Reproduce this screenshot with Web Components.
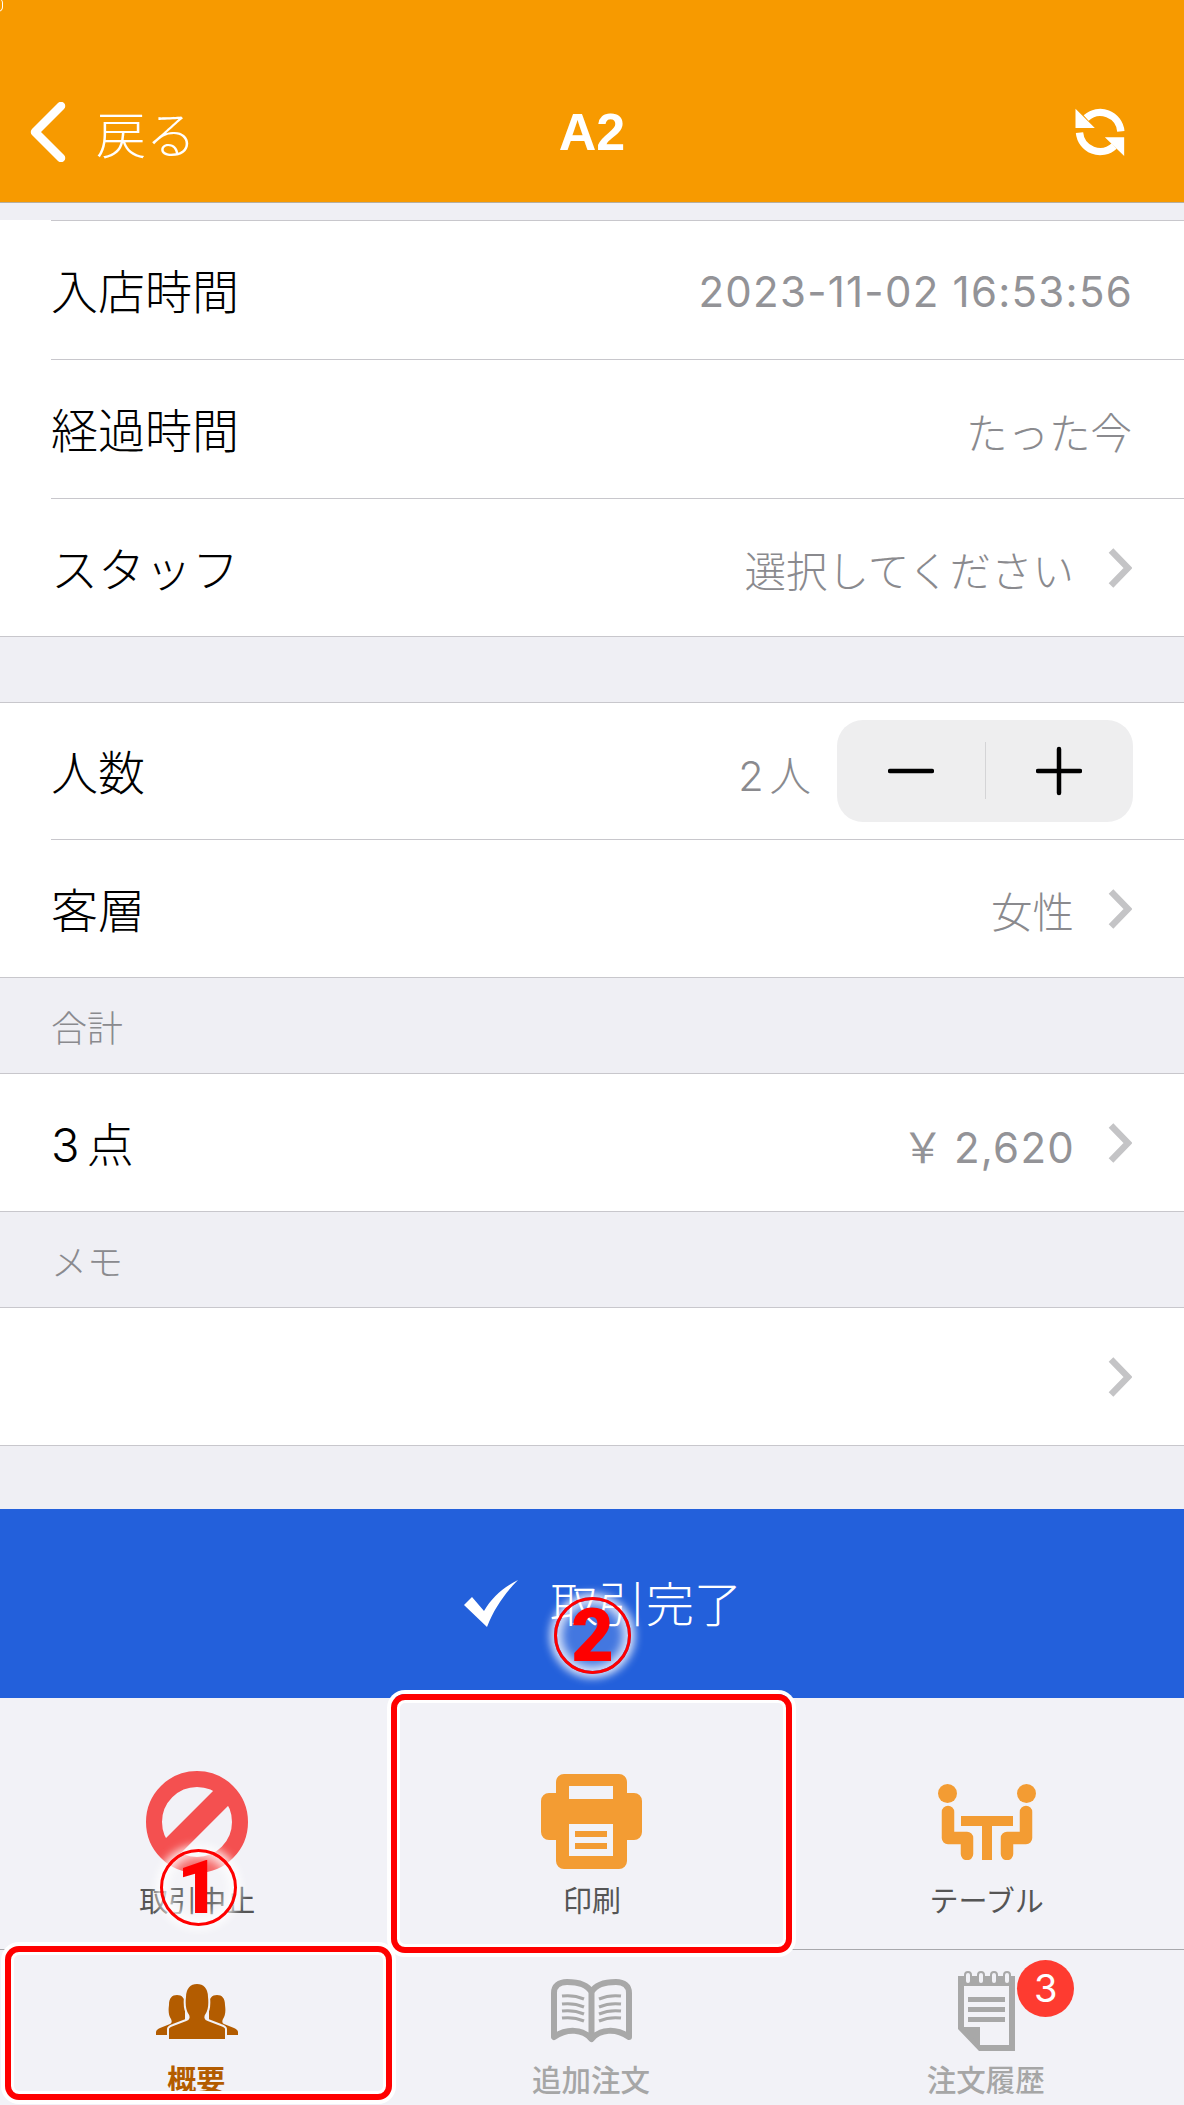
<!DOCTYPE html>
<html lang="ja">
<head>
<meta charset="utf-8">
<title>A2</title>
<style>
  html, body { margin: 0; padding: 0; }
  body {
    width: 1184px;
    height: 2105px;
    overflow: hidden;
    position: relative;
    background: #efeff4;
    font-family: Inter, "Noto Sans CJK JP", sans-serif;
    -webkit-font-smoothing: antialiased;
  }
  order-screen { height: 2105px; }
  .num { font-size: 42px; font-weight: 400; letter-spacing: 1.250px; margin-right: -1px; color: #939397; }
  .yen { word-spacing: -4px; }
  .tight { word-spacing: -6px; }
</style>
</head>
<body>
<order-screen>
  <nav-bar slot="nav" title-text="A2"></nav-bar>

  <form-section first>
    <form-row h="139">入店時間<span slot="value" class="num">2023-11-02 16:53:56</span></form-row>
    <form-row h="139">経過時間<span slot="value">たった今</span></form-row>
    <form-row h="137" last chevron>スタッフ<span slot="value">選択してください</span></form-row>
  </form-section>

  <form-section gap="65">
    <form-row>人数<span slot="value" class="tight">2 人</span><qty-stepper slot="extra"></qty-stepper></form-row>
    <form-row last chevron>客層<span slot="value">女性</span></form-row>
  </form-section>

  <section-head>合計</section-head>
  <form-section>
    <form-row last chevron><span class="tight">3 点</span><span slot="value" class="num yen">￥ 2,620</span></form-row>
  </form-section>

  <section-head>メモ</section-head>
  <form-section>
    <form-row last chevron></form-row>
  </form-section>

  <done-button>取引完了</done-button>

  <tool-bar>
    <tool-item>
      <svg slot="icon" width="102" height="102" viewBox="0 0 102 102"><circle cx="51" cy="51" r="43" fill="none" stroke="#f45050" stroke-width="16"/><path d="M81 21 21 81" stroke="#f45050" stroke-width="21"/></svg>
      取引中止
    </tool-item>
    <tool-item>
      <svg slot="icon" width="101" height="95" viewBox="0 0 101 95"><path fill="#f39c33" fill-rule="evenodd" d="M15 8a8 8 0 0 1 8-8h55a8 8 0 0 1 8 8v11h7a8 8 0 0 1 8 8v31a8 8 0 0 1-8 8h-7v21a8 8 0 0 1-8 8H23a8 8 0 0 1-8-8V66H8a8 8 0 0 1-8-8V27a8 8 0 0 1 8-8h7ZM28 12v13h44V12ZM28 50v32h44V50ZM34 57h32v6H34ZM34 69h32v6H34Z"/></svg>
      印刷
    </tool-item>
    <tool-item>
      <svg slot="icon" width="98" height="76" viewBox="0 0 98 76" fill="none" stroke="#f39c33"><circle cx="9.500" cy="9.500" r="9.500" fill="#f39c33" stroke="none"/><circle cx="88.500" cy="9.500" r="9.500" fill="#f39c33" stroke="none"/><path stroke-width="12.500" stroke-linecap="round" stroke-linejoin="round" d="M10 28v26h19v16M88 28v26H69v16"/><path fill="#f39c33" stroke="none" d="M23 32h52v10H54v34H44V42H23Z"/></svg>
      テーブル
    </tool-item>
  </tool-bar>

  <tab-bar>
    <tab-item active>
      <svg slot="icon" width="82" height="56" viewBox="0 0 82 56" fill="#b35c00"><path d="M0 52v-3c0-2 2-3 4-4l10-4c2-1 2-3 1-5-2-3-3-7-2-14 0-7 3-10 8-10s8 3 8 10v30Z"/><path d="M82 52v-3c0-2-2-3-4-4l-10-4c-2-1-2-3-1-5 2-3 3-7 2-14 0-7-3-10-8-10s-8 3-8 10v30Z"/><path stroke="#f2f2f7" stroke-width="2" d="M12 57V46c0-2 2-3 5-4l13-5c3-1 3-3 2-5-3-4-4-9-3-18C29 5 34 0 41 0s12 5 12 14c1 9 0 14-3 18-1 2-1 4 2 5l13 5c3 1 5 2 5 4v11Z"/></svg>
      概要
    </tab-item>
    <tab-item>
      <svg slot="icon" width="81" height="64" viewBox="0 0 81 64" fill="none" stroke="#a8a8a8"><path stroke-width="6" stroke-linejoin="round" d="M40.500 60C32 50 16 49 3 58V14C3 7 8 3 16 3c11 0 20 2 24.500 10 4.500-8 13.500-10 24.500-10 8 0 13 4 13 11v44C65 49 49 50 40.500 60ZM40.500 13v47"/><path stroke-width="3" d="M11 17c8-1 15 0 22 3M11 25c8-1 15 0 22 3M11 32c8-1 15 0 22 3M11 39c8-1 15 0 22 3M70 17c-8-1-15 0-22 3M70 25c-8-1-15 0-22 3M70 32c-8-1-15 0-22 3M70 39c-8-1-15 0-22 3"/></svg>
      追加注文
    </tab-item>
    <tab-item badge="3">
      <svg slot="icon" width="58" height="80" viewBox="0 0 58 80"><path fill="#a8a8a8" fill-rule="evenodd" d="M0 5h57v75H21L0 58ZM6 15v41h16v18h29V15ZM10 26h37v5H10ZM10 36h37v5H10ZM10 46h37v5H10Z"/><path fill="#a8a8a8" d="M7 58h13v16Z"/><g fill="#f2f2f7" stroke="#a8a8a8" stroke-width="2"><rect x="7" y="1" width="6" height="12" rx="3"/><rect x="20" y="1" width="6" height="12" rx="3"/><rect x="33" y="1" width="6" height="12" rx="3"/><rect x="46" y="1" width="6" height="12" rx="3"/></g></svg>
      注文履歴
    </tab-item>
  </tab-bar>

  <callout-box style="left:5px;top:1946px;width:387px;height:154px"></callout-box>
  <callout-box style="left:391px;top:1694px;width:401px;height:259px"></callout-box>
  <callout-mark style="left:160px;top:1849px">1</callout-mark>
  <callout-mark style="left:554px;top:1597px">2</callout-mark>
</order-screen>

<script>
const define = (name, css, html, init) => {
  customElements.define(name, class extends HTMLElement {
    constructor() {
      super()
      this.attachShadow({ mode: "open" }).innerHTML = `<style>${css}</style>${html}`
    }
    connectedCallback() {
      if (init) init(this, this.shadowRoot)
    }
  })
}

const chevron = `<svg class="chev" width="24" height="40" viewBox="0 0 24 40" fill="none" stroke="#c4c4c6" stroke-width="6.500"><path d="M3 2.500 20 20 3 37.500"/></svg>`

define("order-screen", /* css */ `
  :host { display: flex; flex-direction: column; width: 1184px; }
`, `<slot name="nav"></slot><slot></slot>`)

define("nav-bar", /* css */ `
  :host {
    display: grid;
    grid-template-columns: 1fr auto 1fr;
    align-items: center;
    height: 202px;
    position: relative;
    background: #f79a00;
    border-bottom: 1px solid #b5aea0;
    color: #fff;
  }
  :host::before {
    content: "";
    position: absolute;
    left: -2px; top: -2px;
    width: 4px; height: 12px;
    border: 1.500px solid #fff;
    border-left: 0;
    border-radius: 0 5px 5px 0;
  }
  .back { display: flex; align-items: center; gap: 30px; padding: 61px 0 0 30px; font-size: 50px; font-family: "Noto Sans CJK JP", sans-serif; font-weight: 300; }
  .title { padding-top: 61px; font: 700 52px "Liberation Sans", sans-serif; }
  .reload { justify-self: end; padding: 61px 58px 0 0; display: flex; }
`, /* html */ `
  <div class="back">
    <svg width="36" height="60" viewBox="0 0 36 60" fill="none" stroke="#fff" stroke-width="8.500" stroke-linecap="round" stroke-linejoin="round"><path d="M31 4 5 30 31 56"/></svg>
    <span>戻る</span>
  </div>
  <div class="title"></div>
  <div class="reload">
    <svg width="52" height="50" viewBox="42 33 155 150"><g fill="none" stroke="#fff" stroke-width="22"><path d="M78 66A62 62 0 0 1 182 106"/><path d="M58 110A62 62 0 0 0 162 150"/></g><path fill="#fff" d="M46 38V96H104ZM192 180V124H134Z"/></svg>
  </div>
`, (el, root) => {
  root.querySelector(".title").textContent = el.getAttribute("title-text")
})

define("form-section", /* css */ `
  :host {
    display: block;
    background: #fff;
    border-top: 1px solid #c8c7cc;
    border-bottom: 1px solid #c8c7cc;
  }
  :host([first]) { margin-top: 17px; border-top-color: transparent; position: relative; }
  :host([first])::before {
    content: "";
    position: absolute;
    left: 51px; right: 0; top: -1px;
    height: 1px;
    background: #c8c7cc;
  }
`, `<slot></slot>`, (el) => {
  const gap = el.getAttribute("gap")
  if (gap) el.style.marginTop = gap + "px"
})

define("form-row", /* css */ `
  :host {
    display: flex;
    align-items: center;
    height: 137px;
    box-sizing: border-box;
    margin-left: 51px;
    padding-right: 52px;
    border-bottom: 1px solid #c8c7cc;
    color: #000;
    font-size: 47px;
    font-weight: 300;
    font-family: Inter, "Noto Sans CJK JP", sans-serif;
  }
  :host([last]) { border-bottom: 0; }
  .label { flex: 1; padding-bottom: 3px; }
  .value { color: #8a8a8e; font-size: 41.500px; display: flex; align-items: center; padding-top: 3px; }
  .extra { display: flex; }
  .extra ::slotted(*) { margin: 0 -1px 0 26px; }
  .chev { display: block; margin-left: 34px; flex: none; }
  .tail { display: flex; }
`, /* html */ `
  <span class="label"><slot></slot></span>
  <span class="value"><slot name="value"></slot></span>
  <span class="extra"><slot name="extra"></slot></span>
  <span class="tail"></span>
`, (el, root) => {
  if (el.hasAttribute("chevron")) root.querySelector(".tail").innerHTML = chevron
  if (el.hasAttribute("h")) el.style.height = el.getAttribute("h") + "px"
})

define("qty-stepper", /* css */ `
  :host {
    display: grid;
    grid-template-columns: 1fr 1fr;
    align-items: center;
    width: 296px;
    height: 102px;
    border-radius: 26px;
    background: #eeeeef;
    position: relative;
  }
  span { display: flex; justify-content: center; }
  .line { position: absolute; left: 148px; top: 22px; width: 1px; height: 57px; background: #d4d4d6; }
`, /* html */ `
  <span><svg width="46" height="46" viewBox="0 0 46 46" fill="none" stroke="#000" stroke-width="4.500" stroke-linecap="round"><path d="M2 23h42"/></svg></span>
  <span><svg width="46" height="50" viewBox="0 0 46 50" fill="none" stroke="#000" stroke-width="4.500" stroke-linecap="round"><path d="M2 25h42M23 3v44"/></svg></span>
  <i class="line"></i>
`)

define("section-head", /* css */ `
  :host {
    display: flex;
    align-items: center;
    height: 95px;
    padding-left: 51px;
    color: #8a8a8e;
    font-size: 36px;
    font-weight: 300;
    font-family: "Noto Sans CJK JP", sans-serif;
  }
`, `<slot></slot>`)

define("done-button", /* css */ `
  :host {
    display: flex;
    align-items: center;
    justify-content: center;
    gap: 32px;
    height: 189px;
    margin-top: 63px;
    padding-left: 22px;
    box-sizing: border-box;
    background: #2360db;
    color: #fff;
    font-size: 48px;
    font-family: "Noto Sans CJK JP", sans-serif;
    font-weight: 300;
  }
  span { padding-bottom: 6px; }
`, /* html */ `
  <svg width="54" height="47" viewBox="0 0 54 47" fill="#fff"><path d="M0 25 8 17 20 31C28 17 40 7 54 0 42 12 30 28 23 47Z"/></svg>
  <span><slot></slot></span>
`)

define("tool-bar", /* css */ `
  :host {
    display: grid;
    grid-template-columns: repeat(3, 1fr);
    height: 251px;
    background: #f2f2f7;
    border-bottom: 1px solid #a8a8ac;
  }
`, `<slot></slot>`)

define("tool-item", /* css */ `
  :host {
    display: flex;
    flex-direction: column;
    align-items: center;
    height: 251px;
    color: #555;
    font-size: 29px;
    font-family: "Noto Sans CJK JP", sans-serif;
  }
  .icon { height: 184px; display: flex; align-items: flex-end; padding-bottom: 5px; box-sizing: border-box; }
  .icon-in { height: 111px; display: flex; align-items: center; }
  .text { line-height: 34px; }
`, /* html */ `
  <div class="icon"><div class="icon-in"><slot name="icon"></slot></div></div>
  <div class="text"><slot></slot></div>
`)

define("tab-bar", /* css */ `
  :host {
    display: grid;
    grid-template-columns: repeat(3, 1fr);
    height: 155px;
    background: #f2f2f7;
  }
`, `<slot></slot>`)

define("tab-item", /* css */ `
  :host {
    display: flex;
    flex-direction: column;
    align-items: center;
    position: relative;
    color: #a6a6a6;
    font-size: 29.500px;
    font-weight: 500;
    font-family: "Noto Sans CJK JP", sans-serif;
  }
  :host([active]) { color: #b35c00; font-weight: 700; font-size: 29px; }
  .icon { height: 122px; margin-bottom: -11px; display: flex; align-items: center; justify-content: center; }
  .text { line-height: 34px; padding-right: 2px; }
  .badge {
    position: absolute;
    left: 228px; top: 10px;
    width: 57px; height: 57px;
    border-radius: 50%;
    background: #fe3b30;
    color: #fff;
    font: 400 38px/57px Inter, sans-serif;
    text-align: center;
  }
`, /* html */ `
  <div class="icon"><slot name="icon"></slot></div>
  <div class="text"><slot></slot></div>
`, (el, root) => {
  const n = el.getAttribute("badge")
  if (n) {
    const b = document.createElement("div")
    b.className = "badge"
    b.textContent = n
    root.appendChild(b)
  }
})

define("callout-box", /* css */ `
  :host {
    display: block;
    position: absolute;
    box-sizing: border-box;
    border: 6px solid #f00;
    border-radius: 14px;
    box-shadow: 0 0 0 4px #fff, inset 0 0 0 3px #fff;
  }
`, ``)

define("callout-mark", /* css */ `
  :host {
    display: flex;
    align-items: center;
    justify-content: center;
    position: absolute;
    box-sizing: border-box;
    width: 77px;
    height: 77px;
    border: 3px solid #f00;
    border-radius: 50%;
    background: rgba(255, 255, 255, 0.15);
    box-shadow: 0 0 8px 4px rgba(255, 255, 255, 0.85), inset 0 0 10px 5px rgba(255, 255, 255, 0.8);
    color: #f00;
    font: 900 74px/1 Roboto, sans-serif;
  }
`, `<slot></slot>`)
</script>
</body>
</html>
